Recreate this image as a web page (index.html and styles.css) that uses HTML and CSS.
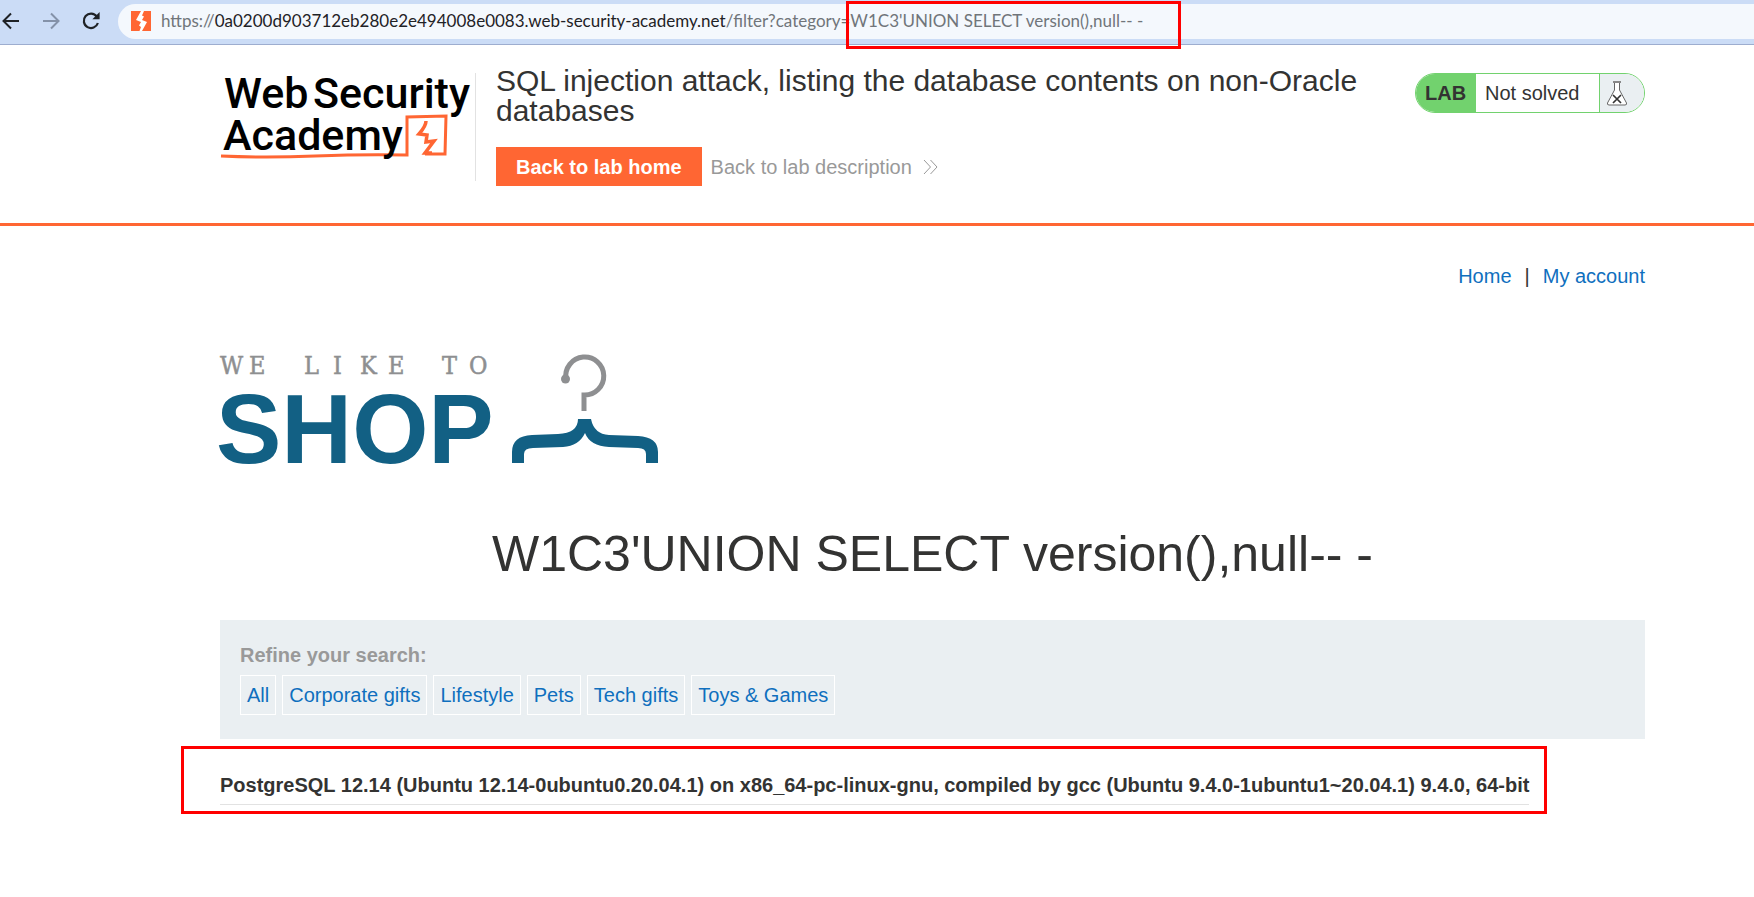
FILE: index.html
```html
<!DOCTYPE html>
<html lang="en">
<head>
<meta charset="utf-8">
<title>SQL injection attack, listing the database contents on non-Oracle databases</title>
<link rel="stylesheet" href="styles.css">
</head>
<body>
<div class="browser-bar">
  <button class="tool" aria-label="Back"><svg width="18" height="18" viewBox="0 0 18 18"><path d="M17 9H2M9 1.500L1.500 9L9 16.500" fill="none" stroke="#1f2226" stroke-width="2"/></svg></button>
  <button class="tool" aria-label="Forward"><svg width="18" height="18" viewBox="0 0 18 18"><path d="M1 9H16M9 1.500L16.500 9L9 16.500" fill="none" stroke="#8492a9" stroke-width="2"/></svg></button>
  <button class="tool" aria-label="Reload"><svg width="18" height="18" viewBox="0 0 18 18"><path d="M14.800 4.500A7.200 7.200 0 1 0 15.900 11" fill="none" stroke="#1f2226" stroke-width="2.200"/><path d="M17.600 0V7.200H10.400Z" fill="#1f2226"/></svg></button>
  <div class="address">
    <svg width="20" height="20" viewBox="0 0 20 20"><path d="M0 0H20V20H0Z" fill="#ff6633"/><path d="M10 0L5 9L10 11L8 14.500L10 16L8.500 20H11L16 11L11 9L13 5.500L11 4.500L13 0Z" fill="#fff"/></svg>
    <div class="url"><span>https://</span><span class="host">0a0200d903712eb280e2e494008e0083.web-security-academy.net</span><span>/filter?category=W1C3'UNION SELECT version(),null-- -</span></div>
  </div>
  <div class="url-mark"></div>
</div>

<header class="lab-header">
  <a class="academy" href="#" aria-label="Web Security Academy">
    <svg width="255" height="90" viewBox="0 0 255 90">
      <path d="M1 83Q45 85 95 83T187 82L187 44L226 43L225 81H205" fill="none" stroke="#ff6633" stroke-width="3"/>
      <path d="M206 48Q206 53 199 61L207 62L206 69L214 68L205 80H212" fill="none" stroke="#ff6633" stroke-width="3.500"/>
      <g class="academy-text"><text x="4" y="35">Web</text><text x="93" y="35">Security</text><text x="3" y="77">Academy</text></g>
    </svg>
  </a>
  <div class="lab-title">
    <h2>SQL injection attack, listing the database contents on non-Oracle databases</h2>
    <div class="lab-links">
      <a class="lab-home" href="#">Back to lab home</a>
      <a class="lab-desc" href="#">Back to lab description <svg width="15" height="16" viewBox="0 0 15 16"><path d="M1 1L7.500 8L1 15M7.500 1L14 8L7.500 15" fill="none" stroke="#999"/></svg></a>
    </div>
  </div>
  <div class="status">
    <strong>LAB</strong><span>Not solved</span>
    <div class="flask"><svg width="22" height="26" viewBox="0 0 22 26"><path d="M7 1.500H15M8.500 1.500V10L1.500 23Q1 25 3 25H19Q21 25 20.500 23L13.500 10V1.500" fill="#fff" stroke="#666"/><path d="M7 1H15V3H7Z" fill="#888"/><path d="M7 15L15 23M15 15L7 23" stroke="#333" stroke-width="1.700"/></svg></div>
  </div>
</header>

<main class="page">
  <nav><a href="#">Home</a><span>|</span><a href="#">My account</a></nav>
  <svg class="shop-logo" width="440" height="112" viewBox="0 0 440 112" role="img" aria-label="We like to shop">
    <text class="tagline" y="20" x="0 29 84 113 140 168 222 249">WELIKETO</text>
    <text class="shop" x="-4" y="109">SHOP</text>
    <path d="M346 25A19 19 0 1 1 364 41V57" fill="none" stroke="#8e8f91" stroke-width="5"/>
    <circle cx="345.500" cy="25" r="4.500" fill="#8e8f91"/>
    <path d="M304 109H292V98Q292 82 312 81L338 80Q358 79 358 65H371Q374 80 389 81L418 82Q438 83 438 98V109H426V100Q426 94 418 94L389 93Q370 92 365 79Q359 92 343 93L313 94Q304 94 304 100V109Z" fill="#126084"/>
  </svg>
  <h1>W1C3'UNION SELECT version(),null-- -</h1>
  <section class="filters">
    <div class="filter-label">Refine your search:</div>
    <div class="tags">
      <a href="#">All</a>
      <a href="#">Corporate gifts</a>
      <a href="#">Lifestyle</a>
      <a href="#">Pets</a>
      <a href="#">Tech gifts</a>
      <a href="#">Toys &amp; Games</a>
    </div>
  </section>
  <div class="result">
    <table><tbody><tr><th scope="row">PostgreSQL 12.14 (Ubuntu 12.14-0ubuntu0.20.04.1) on x86_64-pc-linux-gnu, compiled by gcc (Ubuntu 9.4.0-1ubuntu1~20.04.1) 9.4.0, 64-bit</th></tr></tbody></table>
    <div class="result-mark"></div>
  </div>
</main>
</body>
</html>
```
FILE: styles.css
```css
* { box-sizing: border-box; }
body {
  margin: 0;
  background: #fff;
  color: #333332;
  font: 20px/24px "Liberation Sans", Arial, sans-serif;
}
a { color: #0f6fbe; text-decoration: none; }
svg { display: block; }

.browser-bar {
  position: relative;
  display: flex;
  align-items: center;
  gap: 22px;
  height: 45px;
  padding: 0 0 2px 2px;
  background: #cbdcf6;
  border-bottom: 1px solid #9dadcf;
}
.tool { padding: 0; border: 0; background: none; }
.address {
  flex: 1;
  display: flex;
  align-items: center;
  gap: 10px;
  height: 35px;
  margin-left: -4px;
  padding-left: 13px;
  border-radius: 18px 0 0 18px;
  background: #f4f8fd;
}
.url {
  color: #70757a;
  font: 17px/24px Lato, "Open Sans", sans-serif;
  white-space: nowrap;
}
.host { color: #1f2226; }
.url-mark {
  position: absolute;
  left: 846px;
  top: 1px;
  width: 335px;
  height: 48px;
  border: 3px solid #f00;
}

.lab-header {
  display: flex;
  align-items: flex-start;
  min-height: 181px;
  padding: 21px 109px 0 220px;
  border-bottom: 3px solid #ff6633;
}
.academy {
  height: 108px;
  margin-top: 7px;
  border-right: 1px solid #e2e2e2;
}
.academy svg { overflow: visible; }
.academy-text { font: 500 43px Roboto, sans-serif; fill: #000; }
.lab-title { flex: 1; padding: 0 40px 0 20px; }
h2 { margin: 0; font-size: 30px; line-height: 30px; font-weight: 400; }
.lab-links { display: flex; align-items: center; gap: 9px; margin-top: 21px; }
.lab-home {
  padding: 1px 20px 0;
  background: #ff6633;
  color: #fff;
  font-weight: 700;
  line-height: 38px;
}
.lab-desc { display: flex; align-items: center; gap: 11px; color: #999; }
.status {
  display: flex;
  height: 40px;
  margin-top: 7px;
  overflow: hidden;
  border: 1px solid #72d26e;
  border-radius: 20px;
  line-height: 39px;
}
.status strong { width: 60px; padding-left: 9px; background: #72d26e; }
.status span { width: 123px; padding-left: 9px; }
.flask { width: 45px; padding: 6px; border-left: 1px solid #72d26e; background: #eaeff2; }

.page { padding: 38px 109px 40px 220px; }
nav { display: flex; justify-content: flex-end; gap: 13px; }
.shop-logo { margin-top: 66px; overflow: visible; }
.tagline {
  font: 25px "DejaVu Serif Condensed", "DejaVu Serif", serif;
  fill: #8e8f91;
  stroke: #8e8f91;
  stroke-width: 0.5;
}
.shop { font: 700 98px "Liberation Sans", Arial, sans-serif; fill: #126084; }
h1 {
  margin: 60px 0 38px;
  font-size: 50px;
  line-height: 56px;
  font-weight: 400;
  text-align: center;
}
.filters { min-height: 119px; padding: 23px 20px; background: #eaeff2; }
.filter-label { margin-bottom: 8px; color: #999; font-weight: 700; }
.tags { display: flex; flex-wrap: wrap; gap: 6px; }
.tags a {
  padding: 0 6px;
  border: 1px solid #fff;
  line-height: 38px;
}
.result { position: relative; width: fit-content; margin-top: 34px; }
table { border-collapse: collapse; }
th {
  padding: 0 0 7px;
  border-bottom: 1px solid #e2e2e2;
  text-align: left;
}
.result-mark {
  position: absolute;
  inset: -27px -18px -9px -39px;
  border: 3px solid #f00;
}
```
